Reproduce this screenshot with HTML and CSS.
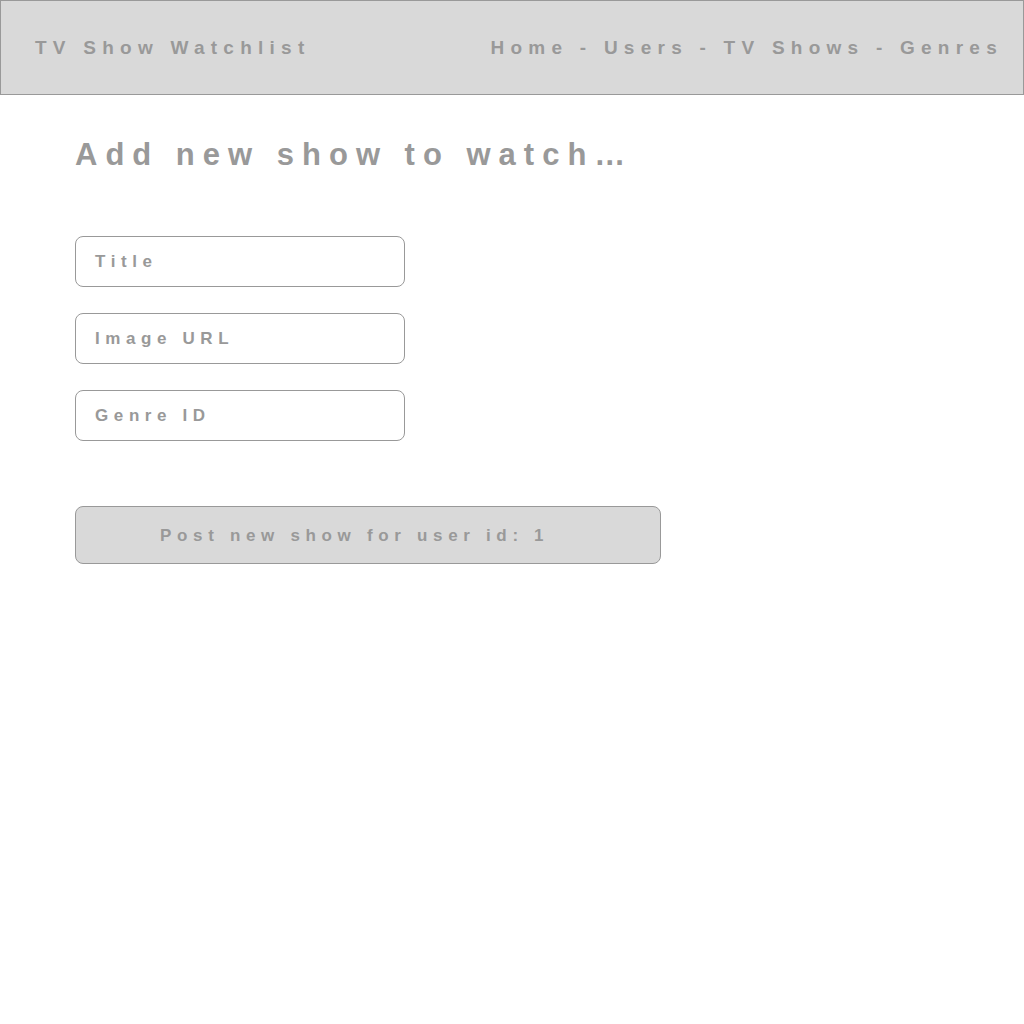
FILE: index.html
```html
<!DOCTYPE html>
<html>
<head>
<meta charset="utf-8">
<link rel="stylesheet" href="styles.css">
</head>
<body>
<header class="topbar">
  <div class="brand">TV Show Watchlist</div>
  <nav class="nav">Home - Users - TV Shows - Genres</nav>
</header>
<main class="content">
  <h1 class="heading">Add new show to watch…</h1>
  <form class="form">
    <div class="field">Title</div>
    <div class="field">Image URL</div>
    <div class="field">Genre ID</div>
    <div class="submit">Post new show for user id: 1</div>
  </form>
</main>
</body>
</html>
```
FILE: styles.css
```css
html, body {
  margin: 0;
  padding: 0;
  background: #ffffff;
  font-family: "Liberation Sans", Arial, sans-serif;
  font-weight: bold;
  color: #999999;
}
.topbar {
  height: 93px;
  border: 1px solid #999999;
  background: #d9d9d9;
  display: flex;
  align-items: center;
  justify-content: space-between;
  padding: 0 20px 0 34px;
  font-size: 19px;
  letter-spacing: 6.25px;
}
.content {
  padding: 0 0 0 75px;
}
.heading {
  margin: 0;
  padding-top: 36px;
  font-size: 31px;
  letter-spacing: 8px;
  line-height: 48px;
  font-weight: bold;
}
.form {
  display: flex;
  flex-direction: column;
  gap: 26px;
  margin-top: 57px;
  width: 586px;
}
.field {
  width: 309px;
  height: 48px;
  border: 1px solid #999999;
  border-radius: 8px;
  padding: 1px 0 0 19px;
  display: flex;
  align-items: center;
  font-size: 17px;
  letter-spacing: 5.6px;
}
.submit {
  margin-top: 39px;
  height: 55px;
  border: 1px solid #999999;
  border-radius: 8px;
  background: #d9d9d9;
  display: flex;
  align-items: center;
  padding: 1px 0 0 84px;
  font-size: 17px;
  letter-spacing: 5.67px;
}
```
